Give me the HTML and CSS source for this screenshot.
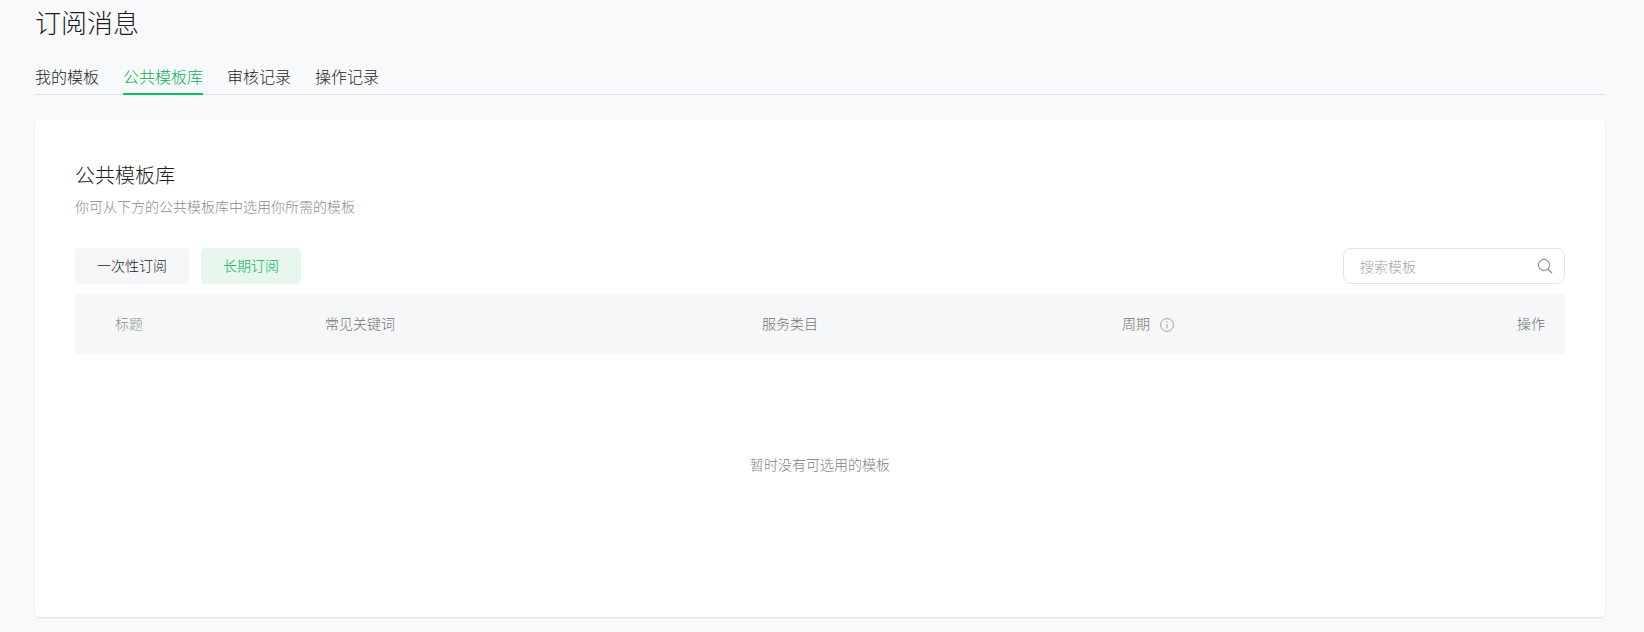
FILE: index.html
```html
<!DOCTYPE html>
<html lang="zh-CN">
<head>
  <meta charset="UTF-8" />
  <title>订阅消息</title>
  <link rel="stylesheet" href="styles.css">
</head>
<body>
  <h1 class="page-title">订阅消息</h1>

  <div class="tabs">
    <a class="tab">我的模板</a>
    <a class="tab active">公共模板库</a>
    <a class="tab">审核记录</a>
    <a class="tab">操作记录</a>
  </div>

  <div class="card">
    <h2 class="card-title">公共模板库</h2>
    <p class="card-desc">你可从下方的公共模板库中选用你所需的模板</p>

    <div class="toolbar">
      <button class="type-btn">一次性订阅</button>
      <button class="type-btn active">长期订阅</button>
      <div class="search">
        <span class="search-placeholder">搜索模板</span>
        <svg class="search-icon" width="16" height="16" viewBox="0 0 16 16" fill="none" stroke="#8f8f8f" stroke-width="1.1">
          <circle cx="7" cy="7" r="5.6" />
          <path d="M11 11l4 4" stroke-width="1.4" />
        </svg>
      </div>
    </div>

    <div class="table-head">
      <div class="th th-title">标题</div>
      <div class="th">常见关键词</div>
      <div class="th">服务类目</div>
      <div class="th th-period">
        周期
        <svg class="info-icon" width="14" height="14" viewBox="0 0 14 14" fill="none" stroke="#a3a3a3">
          <circle cx="7" cy="7" r="6.4" />
          <path d="M7 6v4.4M7 3.4v1.3" />
        </svg>
      </div>
      <div class="th th-action">操作</div>
    </div>

    <div class="empty">暂时没有可选用的模板</div>
  </div>
</body>
</html>
```

FILE: styles.css
```css
* { box-sizing: border-box; }

body {
  margin: 0;
  padding: 0 39px 15px 35px;
  background: #f8f9fb;
  color: #1c1c1c;
  font-family: "Noto Sans CJK SC", "Noto Sans", sans-serif;
  font-weight: 300;
}

.page-title {
  margin: 0;
  height: 48px;
  font-size: 26px;
  font-weight: 300;
  line-height: 44px;
}

.tabs {
  display: flex;
  gap: 24px;
  height: 47px;
  padding-top: 16px;
  border-bottom: 1px solid #dfe0e4;
}

.tab {
  height: 31px;
  font-size: 16px;
  line-height: 24px;
}

.tab.active {
  color: #06b058;
  border-bottom: 2px solid #07c160;
}

.card {
  height: 498px;
  margin-top: 24px;
  padding: 40px;
  background: #fff;
  border-radius: 4px;
  box-shadow: 0 1px 2px rgba(0, 0, 0, 0.1);
}

.card-title {
  margin: 0;
  font-size: 20px;
  font-weight: 300;
  line-height: 32px;
}

.card-desc {
  margin: 3px 0 0;
  color: #8a8a8a;
  font-size: 14px;
  line-height: 24px;
}

.toolbar {
  display: flex;
  align-items: center;
  gap: 12px;
  margin-top: 30px;
}

.type-btn {
  height: 36px;
  padding: 0 22px 2px;
  background: #f5f6f7;
  border: none;
  border-radius: 4px;
  color: #1c1c1c;
  font-family: inherit;
  font-size: 14px;
  font-weight: 300;
}

.type-btn.active {
  background: #e7f7ee;
  color: #06b058;
}

.search {
  display: flex;
  align-items: center;
  justify-content: space-between;
  width: 222px;
  height: 36px;
  margin-left: auto;
  padding: 0 11px 0 16px;
  border: 1px solid #e3e4e6;
  border-radius: 8px;
}

.search-placeholder {
  color: #a3a3a3;
  font-size: 14px;
}

.table-head {
  display: grid;
  grid-template-columns: 250px 437px 360px 1fr auto;
  align-items: center;
  height: 60px;
  margin-top: 10px;
  padding: 0 20px 2px 0;
  background: #f5f7f8;
}

.th {
  color: #737373;
  font-size: 14px;
}

.th-title {
  padding-left: 40px;
  color: #8f8f8f;
}

.th-period {
  display: flex;
  align-items: center;
  gap: 10px;
}

.info-icon { margin-top: 3px; }

.th-action { text-align: right; }

.empty {
  margin-top: 98px;
  color: #808080;
  font-size: 14px;
  line-height: 24px;
  text-align: center;
}
```
